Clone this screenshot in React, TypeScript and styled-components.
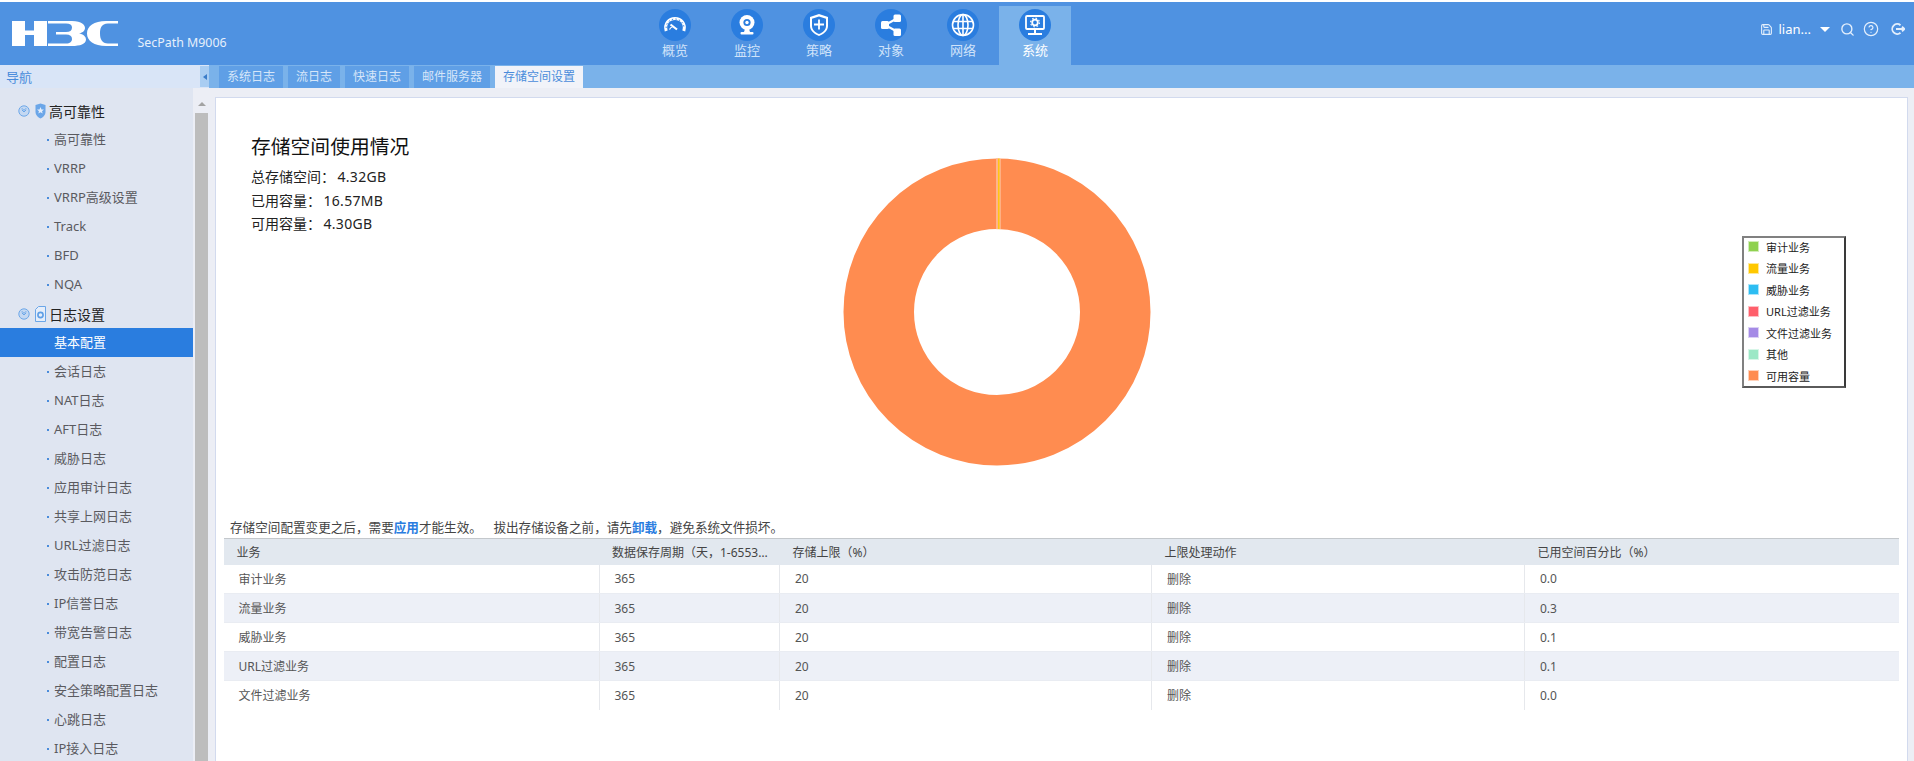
import React from 'react';
import styled, { createGlobalStyle } from 'styled-components';
import { Save, Search, CircleHelp } from 'lucide-react';

const FONT = '"Noto Sans", "Noto Sans CJK SC", sans-serif';

const navItems = ['概览', '监控', '策略', '对象', '网络', '系统'];
const tabs = ['系统日志', '流日志', '快速日志', '邮件服务器', '存储空间设置'];
const haItems = ['高可靠性', 'VRRP', 'VRRP高级设置', 'Track', 'BFD', 'NQA'];
const logItems = [
  '基本配置', '会话日志', 'NAT日志', 'AFT日志', '威胁日志', '应用审计日志', '共享上网日志', 'URL过滤日志',
  '攻击防范日志', 'IP信誉日志', '带宽告警日志', '配置日志', '安全策略配置日志', '心跳日志', 'IP接入日志',
];
const legend = [
  ['审计业务', '#8fd14f'],
  ['流量业务', '#ffc800'],
  ['威胁业务', '#2dbdf2'],
  ['URL过滤业务', '#ff5f6b'],
  ['文件过滤业务', '#a58be6'],
  ['其他', '#9ce8c6'],
  ['可用容量', '#ff8c50'],
];
const rows = [
  ['审计业务', '0.0'],
  ['流量业务', '0.3'],
  ['威胁业务', '0.1'],
  ['URL过滤业务', '0.1'],
  ['文件过滤业务', '0.0'],
];
const colWidths = [375.5, 180.5, 372, 373, 374];

function NavIcon({ index }: { index: number }) {
  const common = { fill: 'none', stroke: '#fff', strokeWidth: 1.6 };
  return (
    <svg width="32" height="32" viewBox="0 0 32 32">
      {index === 0 && (
        <g {...common}>
          <path d="M7.2 22 C5 14.5 10 9.5 16 9.5 C22 9.5 27 14.5 24.8 22" strokeWidth="3" />
          <path d="M7.2 19 C6.5 14.5 11 10 16 10 C21 10 25.5 14.5 24.8 19" stroke="#2a7ddf" strokeWidth="0.9" strokeDasharray="1.4 2.2" />
          <path d="M11.5 15.5 L18 20.5" strokeWidth="2.2" />
          <path d="M10.5 20.5 C11.5 18.5 12.5 18 13.5 18" strokeWidth="1.2" />
        </g>
      )}
      {index === 1 && (
        <g>
          <circle cx="16" cy="13.5" r="7.5" fill="#fff" />
          <circle cx="16" cy="13.5" r="3.6" fill="#2a7ddf" />
          <circle cx="16" cy="13.5" r="1.7" fill="#fff" />
          <path d="M14 20 H18 L19 23 H13 Z" fill="#fff" />
          <rect x="9.5" y="23" width="13" height="2.4" fill="#fff" rx="1" />
        </g>
      )}
      {index === 2 && (
        <g>
          <path d="M16 5 L25 8 V17 C25 22 20 25.5 16 27 C12 25.5 7 22 7 17 V8 Z" fill="#fff" />
          <path d="M16 7.5 L23 9.8 V17 C23 21 19.5 23.7 16 25 C12.5 23.7 9 21 9 17 V9.8 Z" fill="#2a7ddf" />
          <path d="M16 10.5 V20.5 M11 15.5 H21" stroke="#fff" strokeWidth="1.8" />
        </g>
      )}
      {index === 3 && (
        <g fill="#fff">
          <path d="M10 16 L22 9.5 M10 16 L22 22.5" stroke="#fff" strokeWidth="2" />
          <rect x="6" y="12" width="8" height="8" rx="1.5" />
          <rect x="18.5" y="5.5" width="7.5" height="7.5" rx="1.5" />
          <rect x="18.5" y="19.5" width="7.5" height="7.5" rx="1.5" />
        </g>
      )}
      {index === 4 && (
        <g {...common}>
          <circle cx="16" cy="16" r="10.5" />
          <ellipse cx="16" cy="16" rx="5" ry="10.5" />
          <path d="M16 5.5 V26.5 M6 12.5 H26 M6 19.5 H26" />
        </g>
      )}
      {index === 5 && (
        <g>
          <rect x="7" y="7" width="18" height="13" fill="none" stroke="#fff" strokeWidth="1.8" rx="1" />
          <circle cx="16" cy="13.5" r="2.8" fill="none" stroke="#fff" strokeWidth="1.8" />
          <circle cx="16" cy="13.5" r="4.4" fill="none" stroke="#fff" strokeWidth="1.2" strokeDasharray="1.6 1.85" />
          <path d="M15 20 H17 V24 H15 Z" fill="#fff" />
          <rect x="9" y="24" width="14" height="2" fill="#fff" />
        </g>
      )}
    </svg>
  );
}

function Logo() {
  return (
    <svg width="106" height="25" viewBox="0 0 106 25">
      <g fill="#fff">
        <path d="M0 0 H13 V9.5 H22 V0 H35 V25 H22 V14 H13 V25 H0 Z" />
        <path d="M36 0 H60 C70 0 73 4 73 7 C73 10 70 12 67 12.5 C71 13 74 15.5 74 18.5 C74 23 68 25 60 25 H36 V22.5 H54 C58 22.5 60 20.5 60 18 C60 15 58 13.5 54 13.5 H44 V11 H54 C58 11 60 9.5 60 6.5 C60 4 58 2.5 54 2.5 H36 Z" />
        <path d="M106 2.5 H96 C89 2.5 88 8 88 12.5 C88 18 90 22.5 96 22.5 H106 V25 H94 C82 25 75 20 75 12.5 C75 5 82 0 94 0 H106 Z" />
      </g>
    </svg>
  );
}

function GroupIcons({ kind }: { kind: 'shield' | 'file' }) {
  return (
    <>
      <svg width="12" height="12" viewBox="0 0 12 12">
        <circle cx="6" cy="6" r="5.2" fill="#c4d8f2" stroke="#6ea8e8" strokeWidth="1" />
        <path d="M3.8 4.8 L6 7 L8.2 4.8 M3.8 3.2 L6 5.4 L8.2 3.2" fill="none" stroke="#5f9fe6" strokeWidth="0.9" />
      </svg>
      {kind === 'shield' ? (
        <svg width="11" height="16" viewBox="0 0 11 16">
          <path d="M5.5 0.5 L10.5 2 V9 C10.5 12 8 14.5 5.5 15.5 C3 14.5 0.5 12 0.5 9 V2 Z" fill="#6ba6e8" />
          <path d="M5.5 4 L6.5 6.4 L9 6.6 L7 8.2 L7.7 10.6 L5.5 9.3 L3.3 10.6 L4 8.2 L2 6.6 L4.5 6.4 Z" fill="#e4eefb" />
        </svg>
      ) : (
        <svg width="11" height="16" viewBox="0 0 11 16">
          <path d="M0.5 3.5 L3.5 0.5 H10.5 V15.5 H0.5 Z" fill="#e6eefa" stroke="#6ba6e8" strokeWidth="1" />
          <circle cx="5.5" cy="9" r="2.6" fill="none" stroke="#5f9fe6" strokeWidth="1.6" />
        </svg>
      )}
    </>
  );
}

function Donut() {
  return (
    <DonutSvg width="308" height="308" viewBox="0 0 308 308">
      <circle cx="154" cy="154" r="118.25" fill="none" stroke="#ff8c50" strokeWidth="70.5" />
      <rect x="153" y="0.6" width="2.2" height="70.6" fill="#ffb48a" />
      <rect x="155.2" y="0.5" width="1.5" height="70.6" fill="#ffd000" />
      <rect x="156.7" y="0.6" width="0.8" height="70.6" fill="#ffd2b6" />
    </DonutSvg>
  );
}

export default function App() {
  return (
    <Page>
      <GlobalStyle />
      <Header>
        <Brand>
          <Logo />
          <ProductName>SecPath M9006</ProductName>
        </Brand>
        <TopNav>
          {navItems.map((label, i) => (
            <TopNavItem key={label} $active={label === '系统'}>
              <IconCircle>
                <NavIcon index={i} />
              </IconCircle>
              <TopNavLabel $active={label === '系统'}>{label}</TopNavLabel>
            </TopNavItem>
          ))}
        </TopNav>
        <Utilities>
          <Save size={13} strokeWidth={2} />
          <UserName>lian...</UserName>
          <Caret />
          <SearchIcon size={15} strokeWidth={2.2} />
          <HelpIcon size={16} strokeWidth={1.8} />
          <svg width="15" height="12" viewBox="0 0 15 12" fill="none" stroke="#e4effc" strokeWidth="1.8">
            <path d="M10.5 2.2 A5 5 0 1 0 10.5 9.8" />
            <path d="M6 6 H14.5 M12 3.8 L14.5 6 L12 8.2" />
          </svg>
        </Utilities>
      </Header>
      <Body>
        <Sidebar>
          <NavTitle>
            <span>导航</span>
            <Toggle />
          </NavTitle>
          <SidebarBody>
            <Menu>
              <GroupRow>
                <GroupIcons kind="shield" />
                <span>高可靠性</span>
              </GroupRow>
              {haItems.map((item) => (
                <MenuRow key={item}>{item}</MenuRow>
              ))}
              <GroupRow>
                <GroupIcons kind="file" />
                <span>日志设置</span>
              </GroupRow>
              {logItems.map((item) => (
                <MenuRow key={item} $active={item === '基本配置'}>
                  {item}
                </MenuRow>
              ))}
            </Menu>
            <ScrollTrack>
              <ScrollArrow />
              <ScrollThumb />
            </ScrollTrack>
          </SidebarBody>
        </Sidebar>
        <Main>
          <TabBar>
            {tabs.map((tab) => (
              <Tab key={tab} $active={tab === '存储空间设置'}>
                {tab}
              </Tab>
            ))}
          </TabBar>
          <Content>
            <Panel>
              <ChartRow>
                <Summary>
                  <SummaryTitle>存储空间使用情况</SummaryTitle>
                  <SummaryLine>
                    总存储空间：<SummaryValue>4.32GB</SummaryValue>
                  </SummaryLine>
                  <SummaryLine>
                    已用容量：<SummaryValue>16.57MB</SummaryValue>
                  </SummaryLine>
                  <SummaryLine>
                    可用容量：<SummaryValue>4.30GB</SummaryValue>
                  </SummaryLine>
                </Summary>
                <Donut />
                <Legend>
                  {legend.map(([name, color]) => (
                    <LegendItem key={name}>
                      <Swatch $color={color} />
                      {name}
                    </LegendItem>
                  ))}
                </Legend>
              </ChartRow>
              <Notice>
                存储空间配置变更之后，需要<NoticeLink>应用</NoticeLink>才能生效。
                <NoticeGap />
                拔出存储设备之前，请先<NoticeLink>卸载</NoticeLink>，避免系统文件损坏。
              </Notice>
              <Table>
                <colgroup>
                  {colWidths.map((w, i) => (
                    <Col key={i} $width={w} />
                  ))}
                </colgroup>
                <thead>
                  <tr>
                    <HeadCell>业务</HeadCell>
                    <HeadCell>数据保存周期（天，1-65535）</HeadCell>
                    <HeadCell>存储上限（%）</HeadCell>
                    <HeadCell>上限处理动作</HeadCell>
                    <HeadCell>已用空间百分比（%）</HeadCell>
                  </tr>
                </thead>
                <tbody>
                  {rows.map(([name, used]) => (
                    <Row key={name}>
                      <Cell>{name}</Cell>
                      <Cell>365</Cell>
                      <Cell>20</Cell>
                      <Cell>删除</Cell>
                      <Cell>{used}</Cell>
                    </Row>
                  ))}
                </tbody>
              </Table>
            </Panel>
          </Content>
        </Main>
      </Body>
    </Page>
  );
}

const GlobalStyle = createGlobalStyle`
  html, body {
    margin: 0;
    padding: 0;
    overflow: hidden;
    background: #fff;
    font-family: ${FONT};
  }
`;

const Page = styled.div`
  width: 1914px;
  height: 761px;
  padding-top: 2px;
  box-sizing: border-box;
  display: flex;
  flex-direction: column;
  overflow: hidden;
`;

const Header = styled.header`
  height: 63px;
  flex: none;
  background: #4f92e1;
  display: flex;
  color: #e4effc;
`;

const Brand = styled.div`
  width: 639px;
  flex: none;
  box-sizing: border-box;
  padding: 19px 0 0 12px;
  display: flex;
  align-items: flex-start;
`;

const ProductName = styled.div`
  margin: 14px 0 0 19.5px;
  font-size: 12.4px;
  line-height: 16px;
  color: #e6f0fc;
`;

const TopNav = styled.nav`
  display: flex;
  align-self: flex-end;
`;

const TopNavItem = styled.div<{ $active?: boolean }>`
  width: 72px;
  height: 59px;
  box-sizing: border-box;
  padding-top: 3px;
  display: flex;
  flex-direction: column;
  align-items: center;
  background: ${(props) => (props.$active ? '#7ab2ea' : 'transparent')};
`;

const IconCircle = styled.div`
  width: 32px;
  height: 32px;
  border-radius: 50%;
  background: #2a7ddf;
  display: flex;
  align-items: center;
  justify-content: center;
`;

const TopNavLabel = styled.div<{ $active?: boolean }>`
  margin-top: -1px;
  font-size: 13px;
  line-height: 20px;
  color: ${(props) => (props.$active ? '#fff' : '#cfe3fa')};
`;

const Utilities = styled.div`
  margin-left: auto;
  padding: 19px 9px 0 0;
  height: 16px;
  display: flex;
  align-items: center;
`;

const UserName = styled.span`
  margin: 0 9px 0 6px;
  font-size: 13px;
  color: #fff;
`;

const Caret = styled.span`
  width: 0;
  height: 0;
  margin-right: 10px;
  border-left: 5px solid transparent;
  border-right: 5px solid transparent;
  border-top: 5px solid #fff;
`;

const SearchIcon = styled(Search)`
  margin-right: 8px;
`;

const HelpIcon = styled(CircleHelp)`
  margin-right: 11px;
`;

const Body = styled.div`
  flex: 1;
  display: flex;
  min-height: 0;
`;

const Sidebar = styled.aside`
  width: 209px;
  flex: none;
  display: flex;
  flex-direction: column;
  background: #eceef5;
`;

const NavTitle = styled.div`
  height: 23px;
  flex: none;
  padding-left: 6px;
  background: #d9e5f7;
  display: flex;
  justify-content: space-between;
  align-items: center;
  font-size: 13px;
  color: #4a8cdb;
`;

const Toggle = styled.div`
  width: 9px;
  height: 21px;
  background: #a9cdf2;
  display: flex;
  align-items: center;
  justify-content: center;
  &::before {
    content: '';
    border-top: 3.5px solid transparent;
    border-bottom: 3.5px solid transparent;
    border-right: 4px solid #3a7cc9;
  }
`;

const SidebarBody = styled.div`
  flex: 1;
  min-height: 0;
  display: flex;
  overflow: hidden;
`;

const Menu = styled.div`
  width: 193px;
  flex: none;
  box-sizing: border-box;
  padding-top: 8px;
  background: #dfe5f1;
  height: 700px;
`;

const GroupRow = styled.div`
  height: 29px;
  padding-left: 18px;
  display: flex;
  align-items: center;
  font-size: 14px;
  color: #222;
  & > svg:first-child {
    margin-right: 5px;
  }
  & > span {
    margin-left: 3px;
  }
`;

const MenuRow = styled.div<{ $active?: boolean }>`
  height: 29px;
  padding-left: 54px;
  position: relative;
  font-size: 13px;
  line-height: 29px;
  color: ${(props) => (props.$active ? '#fff' : '#5a5a5f')};
  background: ${(props) => (props.$active ? '#2a7ddf' : 'transparent')};
  &::before {
    content: '';
    display: ${(props) => (props.$active ? 'none' : 'block')};
    position: absolute;
    left: 47px;
    top: 14px;
    width: 2px;
    height: 2px;
    background: #4a8cdb;
  }
`;

const ScrollTrack = styled.div`
  width: 16px;
  flex: none;
  box-sizing: border-box;
  padding: 8px 1px 0 2px;
  display: flex;
  flex-direction: column;
  background: #eceef5;
`;

const ScrollArrow = styled.div`
  height: 17px;
  display: flex;
  justify-content: center;
  padding-top: 6px;
  box-sizing: border-box;
  &::before {
    content: '';
    height: 0;
    border-left: 4px solid transparent;
    border-right: 4px solid transparent;
    border-bottom: 4px solid #a3a3a3;
  }
`;

const ScrollThumb = styled.div`
  flex: 1;
  background: #bdbdbd;
`;

const Main = styled.main`
  flex: 1;
  min-width: 0;
  display: flex;
  flex-direction: column;
`;

const TabBar = styled.div`
  height: 23px;
  flex: none;
  box-sizing: border-box;
  padding: 1px 0 0 10px;
  background: #7ab2ea;
  display: flex;
  gap: 5px;
`;

const Tab = styled.div<{ $active?: boolean }>`
  padding: 0 8px;
  font-size: 12px;
  line-height: 22px;
  color: ${(props) => (props.$active ? '#4a8cdb' : '#d6e6f9')};
  background: ${(props) => (props.$active ? '#f1f3f9' : '#5f9fe6')};
`;

const Content = styled.div`
  flex: 1;
  min-height: 0;
  padding: 9px 6px 0;
  background: #eceef5;
`;

const Panel = styled.section`
  height: 100%;
  box-sizing: border-box;
  background: #fff;
  border: 1px solid #d2daee;
  border-bottom: 0;
`;

const ChartRow = styled.div`
  height: 421px;
  display: flex;
  align-items: flex-start;
`;

const Summary = styled.div`
  width: 627px;
  flex: none;
  box-sizing: border-box;
  padding: 36px 0 0 35px;
  color: #222;
`;

const SummaryTitle = styled.div`
  font-size: 19.8px;
  line-height: 26px;
  color: #111;
  margin-bottom: 5px;
`;

const SummaryLine = styled.div`
  font-size: 14px;
  line-height: 23.5px;
`;

const SummaryValue = styled.span`
  margin-left: 2.5px;
  letter-spacing: 0.3px;
`;

const DonutSvg = styled.svg`
  flex: none;
  margin-top: 60px;
`;

const Legend = styled.div`
  margin: 138px 0 0 591px;
  width: 104px;
  height: 152px;
  box-sizing: border-box;
  padding-left: 4px;
  border: 2px solid #808080;
  border-right-color: #3a3a3a;
  border-bottom-color: #5a5a5a;
  font-size: 11px;
  color: #222;
`;

const LegendItem = styled.div`
  height: 17.5px;
  margin-bottom: 4px;
  display: flex;
  align-items: center;
`;

const Swatch = styled.span<{ $color: string }>`
  width: 9px;
  height: 9px;
  margin-right: 7px;
  background: ${(props) => props.$color};
  border: 1px solid ${(props) => props.$color}66;
  background-clip: padding-box;
`;

const Notice = styled.div`
  height: 19px;
  padding-left: 14px;
  font-size: 12.6px;
  line-height: 18px;
  color: #444;
  white-space: nowrap;
`;

const NoticeLink = styled.span`
  color: #2a7ddf;
  font-weight: 700;
`;

const NoticeGap = styled.span`
  display: inline-block;
  width: 11.5px;
`;

const Table = styled.table`
  margin-left: 7.5px;
  width: 1675px;
  table-layout: fixed;
  border-collapse: collapse;
  font-size: 12px;
`;

const Col = styled.col<{ $width: number }>`
  width: ${(props) => props.$width}px;
`;

const HeadCell = styled.th`
  height: 26px;
  padding: 0 8px 0 13px;
  box-sizing: border-box;
  border-top: 1px solid #c4c8cc;
  background: #e2e8ef;
  font-weight: 400;
  text-align: left;
  color: #444;
  white-space: nowrap;
  overflow: hidden;
  text-overflow: ellipsis;
`;

const Row = styled.tr`
  height: 29px;
  background: #fff;
  &:nth-child(even) {
    background: #edf0f7;
  }
`;

const Cell = styled.td`
  padding: 0 8px 0 15px;
  box-sizing: border-box;
  border-right: 1px solid #e6e8ec;
  border-bottom: 1px solid #e9ecf2;
  color: #555;
  &:last-child {
    border-right: 0;
  }
  tr:last-child > & {
    border-bottom: 0;
  }
`;
